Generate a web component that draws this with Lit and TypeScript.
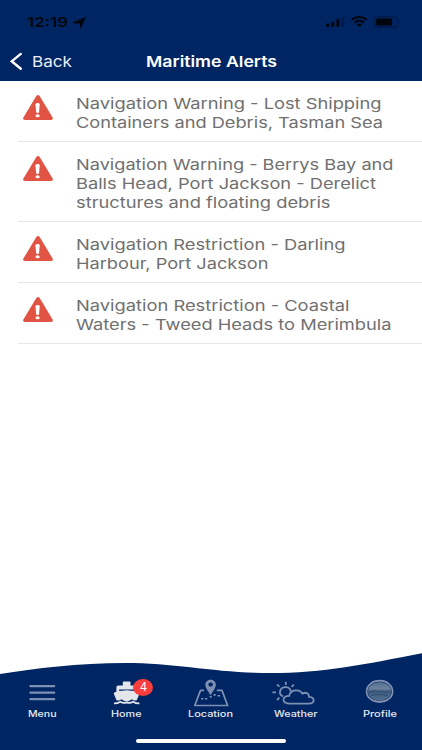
import { LitElement, html, css, svg } from "lit";
import { customElement, property } from "lit/decorators.js";

interface Line { text: string; width: number }

const alerts: Line[][] = [
  [{ text: "Navigation Warning - Lost Shipping", width: 305.5 }, { text: "Containers and Debris, Tasman Sea", width: 307 }],
  [{ text: "Navigation Warning - Berrys Bay and", width: 317.5 }, { text: "Balls Head, Port Jackson - Derelict", width: 300 }, { text: "structures and floating debris", width: 254.5 }],
  [{ text: "Navigation Restriction - Darling", width: 269.5 }, { text: "Harbour, Port Jackson", width: 192.5 }],
  [{ text: "Navigation Restriction - Coastal", width: 273.5 }, { text: "Waters - Tweed Heads to Merimbula", width: 315.5 }],
];

/* One line of wide lettering, set to an exact measure. */
@customElement("wide-text")
export class WideText extends LitElement {
  @property() text = "";
  @property({ type: Number }) width = 100;
  @property({ type: Number }) height = 19;
  @property({ type: Number }) baseline = 15;
  static styles = css`
    :host { display: block; }
    svg { display: block; overflow: visible; fill: currentColor; }
  `;
  render() {
    return html`<svg width=${this.width} height=${this.height}>
      <text x="0" y=${this.baseline} textLength=${this.width} lengthAdjust="spacingAndGlyphs">${this.text}</text>
    </svg>`;
  }
}

const warning = html`<svg class="warning" width="32" height="27" viewBox="0 0 32 27">
  <path d="M14.3 2.1Q16 .1 17.7 2.1L30.6 23.6Q31.6 25.9 28.9 26H3.1Q.4 25.9 1.4 23.6Z" fill="#e15343"/>
  <path d="M13.5 10.2Q13.5 9.1 15.6 9.1T17.7 10.2L17.1 17.9Q17 19 15.6 19T14.1 17.9Z" fill="#fff"/>
  <ellipse cx="15.6" cy="21.7" rx="2.1" ry="1.5" fill="#fff"/>
</svg>`;

const icons = {
  menu: svg`<path d="M10.4 13.2H34.2M10.4 19.7H34.2M10.4 26.2H34.2" stroke-width="2.2" stroke-linecap="round"/>`,
  home: svg`<g fill="#e4e6eb" stroke="none">
    <path d="M17.8 9.2Q17.8 8.5 18.6 8.5H24.7Q25.5 8.5 25.5 9.2V12.5H30Q32 12.5 32 14.1V18.8L33.6 19.3Q34.9 19.8 34.4 21L31.7 27.2Q29.5 28.4 26.8 26.2Q24.2 28.4 21.7 28.2Q19 28.4 16.5 26.2Q13.8 28.4 11.5 27.2L8.9 21Q8.4 19.8 9.8 19.3L11.4 18.8V14.1Q11.4 12.5 13.3 12.5H17.8Z"/>
    </g><path d="M14.2 18V16.4H29.2V18L21.7 17.2Z" fill="#002563" stroke="none"/>
    <path d="M9 30.4Q12.6 30.5 15.3 28.7Q18.3 30.8 21.7 29.4Q25 30.8 28.1 28.7Q30.8 30.5 34.4 30.4" stroke="#e4e6eb" stroke-width="1.7"/>`,
  location: svg`<path d="M15 17.4H11.5L5.8 32.5H38.6L33 17.4H27.8" stroke-width="1.7" stroke-linejoin="round"/>
    <path d="M21.6 22.5C20 19 16.4 15.6 16.4 11.8C16.4 5.2 26.8 5.2 26.8 11.8C26.8 15.6 23.2 19 21.6 22.5ZM21.6 9.5A2.3 2.1 0 1 0 21.6 13.7A2.3 2.1 0 1 0 21.6 9.5Z" fill="#7d90b3" fill-rule="evenodd" stroke="none"/>
    <path d="M12.2 25.8H14.5M16 25.8H18.3M20.6 23.8H22.8M24.5 21.9H26.7M28.5 22.8H31" stroke-width="1.6"/>`,
  weather: svg`<path d="M17.3 30.7C8 30.7 8.8 22.8 16.2 22.8C17.4 15.9 27.1 16 29.3 20.6C33 18.6 36 20.4 36.1 23.8C42.4 24 42.2 30.7 35.6 30.7Z" stroke-width="1.8"/>
    <path d="M10 23.4C4.2 20.7 7.5 13.7 13 14.2C15.8 14.4 17.5 16.2 17.7 18.3M12.8 8.7V12M4 11.4L6.4 13.6M-.6 19.3H3M4 27L6.4 24.6M18.6 13.8L20.9 11.6" stroke-width="1.8"/>`,
  profile: svg`<defs><linearGradient id="sea" x2="0" y2="1"><stop stop-color="#516c8d"/><stop offset=".35" stop-color="#6c839c"/><stop offset=".5" stop-color="#405d81"/><stop offset="1" stop-color="#506e8c"/></linearGradient></defs>
    <ellipse cx="21.6" cy="18.4" rx="11.6" ry="9.5" fill="url(#sea)" stroke="none"/>
    <ellipse cx="21.6" cy="18.4" rx="13" ry="10.7" stroke="#8292b3" stroke-width="1.7"/>
    <path d="M11 19.3Q16 17 22 18.6T32 18.5M13 22.6Q19 20.5 30 22.4" stroke="#2e4c72" stroke-width="1"/>`,
};
type IconName = keyof typeof icons;
const tabs: { icon: IconName; label: string; width: number; badge?: number }[] = [
  { icon: "menu", label: "Menu", width: 28.5 },
  { icon: "home", label: "Home", width: 30.5, badge: 4 },
  { icon: "location", label: "Location", width: 45 },
  { icon: "weather", label: "Weather", width: 43.5 },
  { icon: "profile", label: "Profile", width: 34 },
];

@customElement("app-root")
export class AppRoot extends LitElement {
  static styles = css`
    :host { display: flex; flex-direction: column; width: 422px; height: 750px; overflow: hidden; background: #fff; font-family: Inter, "Liberation Sans", sans-serif; }
    * { box-sizing: border-box; }
    svg { display: block; }
    header { height: 81px; background: #002563; flex: none; }
    .status { height: 44px; padding: 14px 21px 0 27px; display: flex; color: #00050e; }
    .time { font-size: 13.3px; font-weight: 600; }
    .arrow { margin: 3px 0 0 5px; }
    .signals { margin: 1px 0 0 auto; }
    .bar { height: 37px; display: flex; padding: 8px 0 0 10px; color: #fff; }
    .back { font-size: 15.1px; margin-left: 10px; color: #e8edf5; }
    .title { font-size: 15.1px; font-weight: 600; margin-left: 74px; }
    main { flex: 1; padding-left: 18px; }
    .row { display: flex; padding: 13px 0 9px 4px; border-bottom: 1px solid #e6e6e6; }
    .warning { margin: 0 22px 0 0; flex: none; }
    .lines { font-size: 15.15px; color: #707070; }
    footer { flex: none; height: 100px; display: flex; flex-direction: column; background: #002563; }
    .wave { flex: none; height: 29px; }
    nav { display: grid; grid-template-columns: repeat(5, 1fr); height: 55px; margin-top: -6px; }
    .tab { position: relative; display: flex; flex-direction: column; align-items: center; color: #e7ebf2; font-size: 8.8px; font-weight: 500; }
    .icon { width: 44px; height: 34px; fill: none; stroke: #7d90b3; overflow: visible; }
    .badge { position: absolute; left: 49px; top: 5.5px; width: 20px; height: 17px; border-radius: 50%; background: #fa3d3d; color: #fff; font-size: 11.5px; font-weight: 400; display: grid; place-items: center; }
    .grip { width: 150px; height: 4px; border-radius: 2px; background: #fff; margin: 10.5px auto 0; }
  `;
  render() {
    return html`<header>
      <div class="status">
        <wide-text class="time" text="12:19" width="41" height="18" baseline="13"></wide-text>
        <svg class="arrow" width="13" height="12" viewBox="0 0 13 12"><path d="M12.7.2L7.9 10.9Q7.3 11.6 7.1 10.5V6.2H1.1Q-.6 5.9.9 5.1Z" fill="currentColor" stroke="currentColor" stroke-width=".4"/></svg>
        <svg class="signals" width="76" height="15" viewBox="0 0 76 15">
          <g fill="currentColor"><rect x="1.3" y="8.5" width="3" height="3.5" rx=".8"/><rect x="6.3" y="7" width="3" height="5" rx=".8"/><rect x="11.4" y="4.2" width="3" height="7.8" rx=".8"/><rect x="16.3" y="2.1" width="3" height="9.9" rx=".8" opacity=".25"/><rect x="51.2" y="3.4" width="16" height="7.2" rx="1.6"/></g>
          <g fill="none" stroke="currentColor"><path d="M26.5 4.8Q34.2-.6 42 4.8M29.3 7.6Q34.2 4.1 39.1 7.6" stroke-width="2"/><rect x="49.5" y="1.8" width="23" height="10.3" rx="3" opacity=".45"/></g><path d="M31.5 9.5Q34.2 7.6 36.9 9.5L34.2 12Z" fill="currentColor"/><path d="M74 5.4Q76 6.9 74 8.5Z" fill="#001a48"/>
        </svg>
      </div>
      <div class="bar">
        <svg width="12" height="18" viewBox="0 0 12 18"><path d="M10.8 1.9L1.7 9.3L10.8 16.8" stroke="white" stroke-width="2.4" fill="none" stroke-linecap="round"/></svg>
        <wide-text class="back" text="Back" width="40" height="20" baseline="15"></wide-text>
        <wide-text class="title" text="Maritime Alerts" width="131" height="20" baseline="15"></wide-text>
      </div>
    </header>
    <main>${alerts.map(lines => html`<section class="row">${warning}<div class="lines">${lines.map(l => html`<wide-text text=${l.text} width=${l.width}></wide-text>`)}</div></section>`)}</main>
    <footer>
      <svg class="wave" width="422" height="29" viewBox="0 0 422 29"><path d="M0 0H422V3.2C366 14 323 23 270 23C215 23 177 13 125 13C78 13 35 18.5 0 24Z" fill="#fff"/></svg>
      <nav>${tabs.map(t => html`<div class="tab"><svg class="icon" viewBox="0 0 44 34">${icons[t.icon]}</svg>${t.badge ? html`<span class="badge">${t.badge}</span>` : null}<wide-text text=${t.label} width=${t.width} height="14" baseline="9.6"></wide-text></div>`)}</nav>
      <div class="grip"></div>
    </footer>`;
  }
}
